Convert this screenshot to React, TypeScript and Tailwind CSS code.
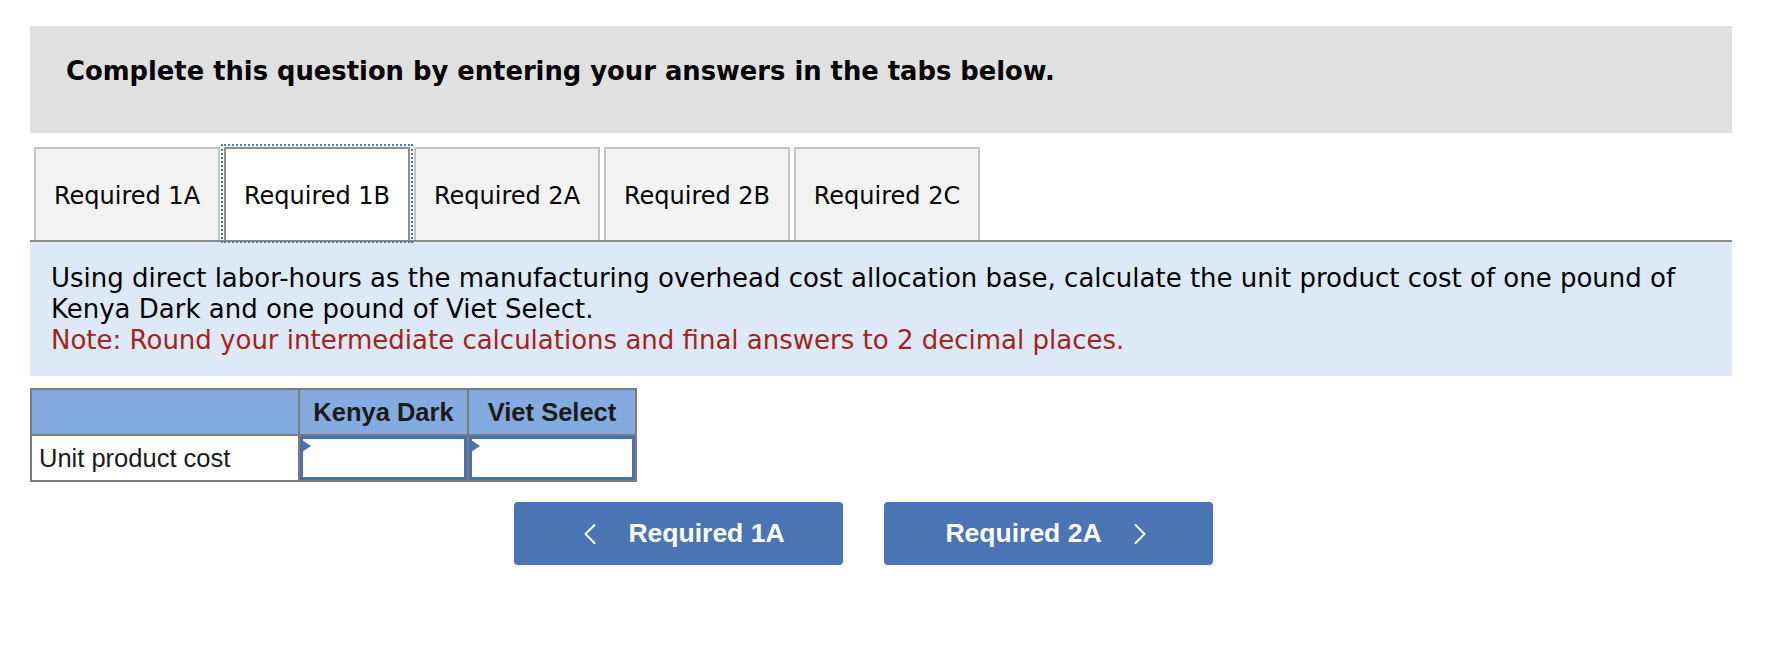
import { ChevronLeft, ChevronRight } from 'lucide-react';

const tabs = ['Required 1A', 'Required 1B', 'Required 2A', 'Required 2B', 'Required 2C'];

function InputCell() {
  return (
    <td className="p-0 border-2 border-[#7b7b7b] h-[46px] align-top">
      <div className="relative h-[44px] border-[3px] border-[#4a72b0] bg-white">
        <span className="absolute left-[-1px] top-[1px] w-0 h-0 border-y-[6px] border-y-transparent border-l-[9px] border-l-[#4a72b0]" />
      </div>
    </td>
  );
}

export default function App() {
  return (
    <div className="min-h-[652px] w-full bg-white pt-[26px] pl-[30px] pr-[58px]">
      {/* instruction banner */}
      <div className="h-[107px] bg-[#e0e0e0] pl-[36px] pt-[30px]">
        <p className="font-['DejaVu_Sans',sans-serif] font-bold text-[25.8px] leading-[31px] text-black">
          Complete this question by entering your answers in the tabs below.
        </p>
      </div>

      {/* tabs */}
      <div className="mt-[14px] flex items-end gap-[4px] pl-[4px] border-b-2 border-[#8c8c8c]">
        {tabs.map((t) => {
          const active = t === 'Required 1B';
          return (
            <div
              key={t}
              className={
                active
                  ? "w-[186px] h-[93px] pt-[3px] flex items-center justify-center bg-white border-2 border-b-0 border-[#8f8f8f] outline-2 outline-dotted outline-offset-1 outline-[#4a78c2] font-['DejaVu_Sans',sans-serif] text-[24px] text-black"
                  : "w-[186px] h-[93px] pt-[3px] flex items-center justify-center bg-[#f2f2f2] border-2 border-b-0 border-[#c4c4c4] font-['DejaVu_Sans',sans-serif] text-[24px] text-black"
              }
            >
              {t}
            </div>
          );
        })}
      </div>

      {/* question text */}
      <div className="bg-[#dde9f7] px-[21px] pt-[21px] pb-[20px] font-['DejaVu_Sans',sans-serif] text-[26px] leading-[31px] text-black">
        <p>
          Using direct labor-hours as the manufacturing overhead cost allocation base, calculate the unit product cost of one pound of
          Kenya Dark and one pound of Viet Select.
        </p>
        <p className="text-[#a3231d]">Note: Round your intermediate calculations and final answers to 2 decimal places.</p>
      </div>

      {/* answer table */}
      <table className="mt-[12px] border-collapse border-2 border-[#7b7b7b] font-['Liberation_Sans',Arial,sans-serif] text-[25.5px]">
        <thead>
          <tr className="bg-[#83abdf] h-[46px]">
            <th className="w-[268px] border-2 border-[#7b7b7b]" />
            <th className="w-[169px] border-2 border-[#7b7b7b] font-bold text-[#1a1a1a] text-center">Kenya Dark</th>
            <th className="w-[168px] border-2 border-[#7b7b7b] font-bold text-[#1a1a1a] text-center">Viet Select</th>
          </tr>
        </thead>
        <tbody>
          <tr className="h-[46px]">
            <td className="border-2 border-[#7b7b7b] pl-[7px] text-[#1a1a1a] text-left">Unit product cost</td>
            <InputCell />
            <InputCell />
          </tr>
        </tbody>
      </table>

      {/* navigation */}
      <div className="mt-[20px] pl-[484px] flex gap-[41px] font-['Liberation_Sans',Arial,sans-serif]">
        <button className="w-[329px] h-[63px] rounded-[4px] bg-[#4a74b3] text-white font-bold text-[26.5px] flex items-center justify-center gap-[20px]">
          <ChevronLeft className="w-[36px] h-[36px]" strokeWidth={1.3} />
          Required 1A
        </button>
        <button className="w-[329px] h-[63px] rounded-[4px] bg-[#4a74b3] text-white font-bold text-[26.5px] flex items-center justify-center gap-[20px] pl-[6px]">
          Required 2A
          <ChevronRight className="w-[36px] h-[36px]" strokeWidth={1.3} />
        </button>
      </div>
    </div>
  );
}
